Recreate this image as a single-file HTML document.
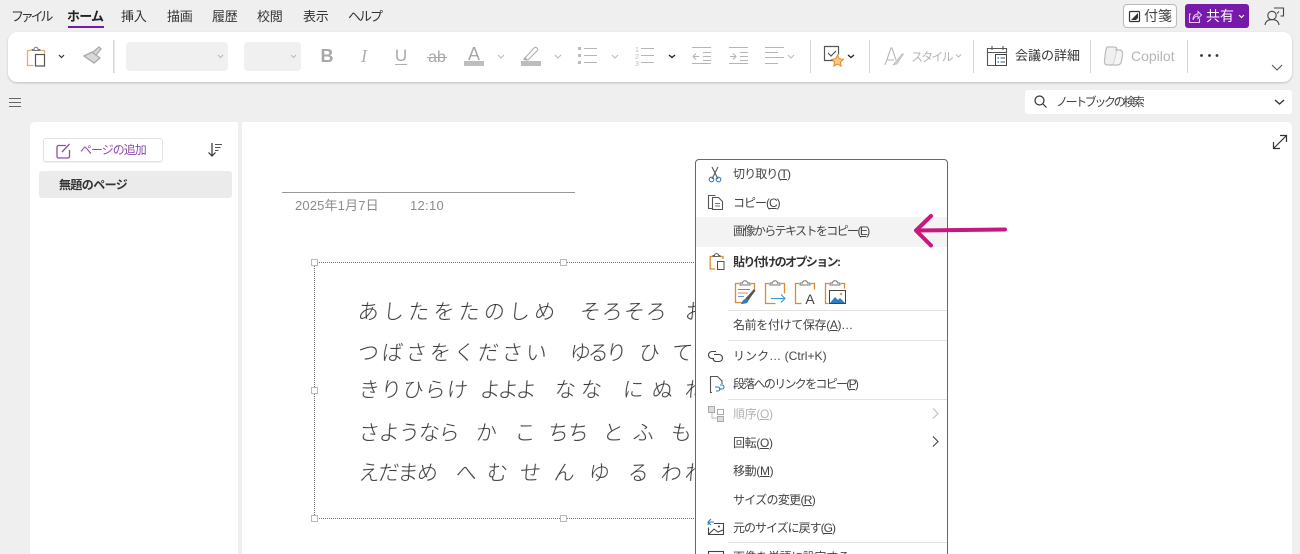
<!DOCTYPE html>
<html lang="ja"><head><meta charset="utf-8">
<style>
html,body{margin:0;padding:0;width:1300px;height:554px;overflow:hidden;background:#efefef}
body{position:relative;font-family:"Liberation Sans","Noto Sans CJK JP",sans-serif;color:#333;font-size:12px}
.t{position:absolute;white-space:nowrap;line-height:16px}
.b{position:absolute;box-sizing:border-box}
.tab{font-size:13px;top:9px;color:#333;letter-spacing:-.2px}
.m{left:733px;font-size:12px;letter-spacing:-.35px;color:#444}
.m u{text-underline-offset:1px}
.h{position:absolute;font-family:"Noto Sans CJK JP",sans-serif;font-size:21px;line-height:30px;color:#333;white-space:nowrap;font-weight:300;transform:skewX(-5deg);filter:blur(.25px)}
svg{position:absolute;left:0;top:0}
</style></head><body>

<span class="t tab" style="left:11px;letter-spacing:-3.2px">ファイル</span>
<span class="t tab" style="left:67px;font-weight:bold;color:#222;letter-spacing:-.8px">ホーム</span>
<div class="b" style="left:68px;top:26px;width:36px;height:2px;background:#7719aa"></div>
<span class="t tab" style="left:121px">挿入</span>
<span class="t tab" style="left:167px">描画</span>
<span class="t tab" style="left:212px">履歴</span>
<span class="t tab" style="left:257px">校閲</span>
<span class="t tab" style="left:303px">表示</span>
<span class="t tab" style="left:348px;letter-spacing:-2px">ヘルプ</span>

<div class="b" style="left:1123px;top:4px;width:54px;height:24px;background:#fff;border:1px solid #bbb;border-radius:4px"></div>
<span class="t" style="left:1144px;top:8px;font-size:14px;color:#444">付箋</span>
<div class="b" style="left:1185px;top:4px;width:64px;height:24px;background:#7719aa;border-radius:3px"></div>
<span class="t" style="left:1206px;top:8px;font-size:14px;color:#fff">共有</span>

<div class="b" style="left:8px;top:32px;width:1284px;height:50px;background:#fff;border-radius:9px;box-shadow:0 1px 2px rgba(0,0,0,.2)"></div>
<div class="b" style="left:126px;top:42px;width:102px;height:29px;background:#f0f0f0;border-radius:4px"></div>
<div class="b" style="left:244px;top:42px;width:57px;height:29px;background:#f0f0f0;border-radius:4px"></div>
<span class="t" style="left:911px;top:49px;font-size:12px;color:#b5b5b5;letter-spacing:-1.8px">スタイル</span>
<span class="t" style="left:1015px;top:48px;font-size:13px;color:#333;letter-spacing:0">会議の詳細</span>
<span class="t" style="left:1131px;top:48px;font-size:14px;color:#b5b5b5">Copilot</span>

<div class="b" style="left:1025px;top:90px;width:267px;height:24px;background:#fff;border-radius:3px"></div>
<span class="t" style="left:1056px;top:94px;font-size:12px;letter-spacing:-2.4px;color:#444">ノートブックの検索</span>

<div class="b" style="left:30px;top:122px;width:208px;height:440px;background:#fff;border-radius:5px 0 0 0"></div>
<div class="b" style="left:242px;top:122px;width:1050px;height:440px;background:#fff;border-radius:0 5px 0 0"></div>
<div class="b" style="left:43px;top:138px;width:120px;height:24px;background:#fff;border:1px solid #e2e2e2;border-radius:3px;box-shadow:0 1px 1px rgba(0,0,0,.06)"></div>
<span class="t" style="left:80px;top:142px;font-size:12px;letter-spacing:-1px;color:#8b4fa9">ページの追加</span>
<div class="b" style="left:39px;top:171px;width:193px;height:27px;background:#ebebeb;border-radius:3px"></div>
<span class="t" style="left:59px;top:177px;font-size:12px;font-weight:bold;letter-spacing:-.6px;color:#333">無題のページ</span>

<div class="b" style="left:282px;top:192px;width:293px;height:1px;background:#999"></div>
<span class="t" style="left:295px;top:198px;font-size:13px;color:#8c8c8c;letter-spacing:.15px">2025年1月7日</span>
<span class="t" style="left:410px;top:198px;font-size:13px;color:#8c8c8c;letter-spacing:.3px">12:10</span>

<div class="b" style="left:314px;top:262px;width:400px;height:257px;border:1px dotted #777"></div>

<span class="h" style="left:358px;top:296px;letter-spacing:4.2px">あしたをたのしめ</span>
<span class="h" style="left:580px;top:296px;letter-spacing:1px">そろそろ</span>
<span class="h" style="left:685px;top:296px">お</span>
<span class="h" style="left:358px;top:337px;letter-spacing:3px">つばさをください</span>
<span class="h" style="left:570px;top:337px;letter-spacing:-3px">ゆるり</span>
<span class="h" style="left:639px;top:337px">ひ</span>
<span class="h" style="left:672px;top:337px">て</span>
<span class="h" style="left:359px;top:374px;letter-spacing:1px">きりひらけ</span>
<span class="h" style="left:480px;top:374px;letter-spacing:-3px">よよよ</span>
<span class="h" style="left:555px;top:374px;letter-spacing:5px">なな</span>
<span class="h" style="left:623px;top:374px;letter-spacing:8px">にぬ</span>
<span class="h" style="left:685px;top:374px">ね</span>
<span class="h" style="left:359px;top:417px;letter-spacing:-1px">さようなら</span>
<span class="h" style="left:476px;top:417px">か</span>
<span class="h" style="left:515px;top:417px">こ</span>
<span class="h" style="left:548px;top:417px;letter-spacing:-1px">ちち</span>
<span class="h" style="left:603px;top:417px">と</span>
<span class="h" style="left:633px;top:417px">ふ</span>
<span class="h" style="left:671px;top:417px">も</span>
<span class="h" style="left:359px;top:457px;letter-spacing:-1.5px">えだまめ</span>
<span class="h" style="left:456px;top:457px">へ</span>
<span class="h" style="left:487px;top:457px">む</span>
<span class="h" style="left:520px;top:457px">せ</span>
<span class="h" style="left:554px;top:457px">ん</span>
<span class="h" style="left:589px;top:457px">ゆ</span>
<span class="h" style="left:628px;top:457px">る</span>
<span class="h" style="left:661px;top:457px">わ</span>
<span class="h" style="left:685px;top:457px">れ</span>

<!-- selection handles -->
<div class="b" style="left:311px;top:259px;width:7px;height:7px;background:#fff;border:1px solid #bbb"></div>
<div class="b" style="left:560px;top:259px;width:7px;height:7px;background:#fff;border:1px solid #bbb"></div>
<div class="b" style="left:311px;top:387px;width:7px;height:7px;background:#fff;border:1px solid #bbb"></div>
<div class="b" style="left:311px;top:515px;width:7px;height:7px;background:#fff;border:1px solid #bbb"></div>
<div class="b" style="left:560px;top:515px;width:7px;height:7px;background:#fff;border:1px solid #bbb"></div>

<!-- context menu -->
<div class="b" style="left:695px;top:159px;width:253px;height:410px;background:#fff;border:1px solid #666;border-radius:4px;overflow:hidden">
  <div class="b" style="left:0;top:57px;width:251px;height:30px;background:#f3f3f3"></div>
  <div class="b" style="left:32px;top:150px;width:219px;height:1px;background:#e2e2e2"></div>
  <div class="b" style="left:32px;top:180px;width:219px;height:1px;background:#e2e2e2"></div>
  <div class="b" style="left:32px;top:239px;width:219px;height:1px;background:#e2e2e2"></div>
  <div class="b" style="left:32px;top:382px;width:219px;height:1px;background:#e2e2e2"></div>
</div>
<span class="t m" style="top:166px;letter-spacing:-.9px">切り取り(<u>T</u>)</span>
<span class="t m" style="top:195px;letter-spacing:-1px">コピー(<u>C</u>)</span>
<span class="t m" style="top:223px;letter-spacing:-1.6px">画像からテキストをコピー(<u>E</u>)</span>
<span class="t m" style="top:254px;font-weight:bold;color:#333;letter-spacing:-1.6px">貼り付けのオプション:</span>
<span class="t m" style="top:317px">名前を付けて保存(<u>A</u>)…</span>
<span class="t m" style="top:348px;letter-spacing:.05px">リンク…  (Ctrl+K)</span>
<span class="t m" style="top:376px;letter-spacing:-1.7px">段落へのリンクをコピー(<u>P</u>)</span>
<span class="t m" style="top:406px;color:#b5b5b5">順序(<u>O</u>)</span>
<span class="t m" style="top:435px">回転(<u>O</u>)</span>
<span class="t m" style="top:463px">移動(<u>M</u>)</span>
<span class="t m" style="top:492px;letter-spacing:-.7px">サイズの変更(<u>R</u>)</span>
<span class="t m" style="top:520px;letter-spacing:-1px">元のサイズに戻す(<u>G</u>)</span>
<span class="t m" style="top:549px">画像を単語に設定する</span>

<svg width="1300" height="554" viewBox="0 0 1300 554" fill="none">
<!-- hamburger -->
<path d="M9 98.500h12M9 102.500h12M9 106.500h12" stroke="#666"/>
<!-- clipboard -->
<path d="M31 50.500h-3.500v15h6M41 50.500h3.500v3" stroke="#f0a860" stroke-width="1.300"/>
<path d="M32 50.500h8v-1h-2c0-3-4-3-4 0h-2z" stroke="#777"/>
<rect x="35.500" y="54.500" width="9" height="11.500" stroke="#555" stroke-width="1.200"/>
<path d="M59 55l2.500 2.500 2.500-2.500" stroke="#333" stroke-width="1.200"/>
<!-- format brush -->
<path d="M84 56l8-4 8 6-6 5zM93 52l6-5 2 2-5 6" stroke="#aaa" stroke-width="1.300" fill="#d8d8d8"/>
<!-- separators -->
<g fill="#d4d4d4"><rect x="113" y="40" width="1.500" height="33"/><rect x="810" y="40" width="1" height="33"/><rect x="869" y="40" width="1" height="33"/><rect x="973" y="40" width="1" height="33"/><rect x="1090" y="40" width="1" height="33"/><rect x="1187" y="40" width="1" height="33"/></g>
<!-- gray chevrons -->
<path d="M218 55l2.500 2.500 2.500-2.500M291 55l2.500 2.500 2.500-2.500M498 55l3 3 3-3M555 55l3 3 3-3M612 55l3 3 3-3M788 55l3 3 3-3M956 54.500l2.500 2.500 2.500-2.500" stroke="#bbb" stroke-width="1.100"/>
<!-- dark chevrons -->
<path d="M669 55l3 2.500 3-2.500M848 55l3 2.500 3-2.500" stroke="#222" stroke-width="1.300"/>
<path d="M1272 65l5 5 5-5" stroke="#555" stroke-width="1.100"/>
<path d="M1275 100l4.500 4 4.500-4" stroke="#333" stroke-width="1.400"/>
<!-- B I U ab -->
<text x="327" y="62" font-family="Liberation Sans" font-size="18" font-weight="bold" fill="#a8a8a8" text-anchor="middle">B</text>
<text x="364" y="62" font-family="Liberation Serif" font-size="18" font-style="italic" fill="#b0b0b0" text-anchor="middle">I</text>
<text x="401" y="61" font-family="Liberation Sans" font-size="17" fill="#a8a8a8" text-anchor="middle">U</text>
<path d="M395 64.500h12" stroke="#b0b0b0"/>
<text x="437" y="62" font-family="Liberation Sans" font-size="16" fill="#a8a8a8" text-anchor="middle">ab</text>
<path d="M427 57.500h20" stroke="#a8a8a8"/>
<!-- font color -->
<text x="474" y="60" font-family="Liberation Sans" font-size="18" fill="#a8a8a8" text-anchor="middle">A</text>
<rect x="464" y="61" width="20" height="5" fill="#bdbdbd"/>
<!-- highlighter -->
<path d="M525 58l9-10c2-2 5 1 3 3l-9 9h-3z" stroke="#b0b0b0" stroke-width="1.100"/>
<path d="M523 60l2-3 3 3z" fill="#aaa"/>
<rect x="521" y="61" width="20" height="5" fill="#bdbdbd"/>
<!-- bullets -->
<g fill="#bbb"><rect x="578" y="47" width="3" height="3"/><rect x="578" y="54" width="3" height="3"/><rect x="578" y="61" width="3" height="3"/></g>
<path d="M584 48.500h13M584 55.500h13M584 62.500h13" stroke="#b5b5b5"/>
<!-- numbers -->
<text x="637" y="52" font-family="Liberation Sans" font-size="7" fill="#bbb" text-anchor="middle">1</text>
<text x="637" y="59" font-family="Liberation Sans" font-size="7" fill="#bbb" text-anchor="middle">2</text>
<text x="637" y="66" font-family="Liberation Sans" font-size="7" fill="#bbb" text-anchor="middle">3</text>
<path d="M641 48.500h13M641 55.500h13M641 62.500h13" stroke="#b5b5b5"/>
<!-- outdent / indent / align -->
<path d="M692 47.500h19M703 52.500h8M703 56.500h8M703 60.500h8M692 63.500h19M699 56.500h-6m3-3l-3 3 3 3" stroke="#b5b5b5"/>
<path d="M729 47.500h19M740 52.500h8M740 56.500h8M740 60.500h8M729 63.500h19M730 56.500h6m-3-3l3 3-3 3" stroke="#b5b5b5"/>
<path d="M765 47.500h19M765 52.500h13M765 57.500h19M765 63.500h13" stroke="#b5b5b5"/>
<!-- todo star -->
<path d="M838 60.500h-13.500v-14h14v8" stroke="#555" stroke-width="1.200"/>
<path d="M828 53l3 3 5-5" stroke="#555" stroke-width="1.200"/>
<path d="M837.500 55l1.800 3.700 4 .6-2.900 2.800.7 4-3.600-1.900-3.600 1.900.7-4-2.900-2.800 4-.6z" fill="#fbc97c" stroke="#e08a2c"/>
<!-- style -->
<path d="M885 65l6-17h1l4 12M887 60h7" stroke="#b5b5b5" stroke-width="1.100"/>
<path d="M893 65l9-11c1-1 2 0 1 1l-6 9z" fill="#ccc" stroke="#bbb" stroke-width=".6"/>
<!-- calendar -->
<path d="M1003 65.500h-15.500v-17h19v5" stroke="#555" stroke-width="1.100"/>
<path d="M988 52.500h19M992 46v4M1003 46v4" stroke="#555" stroke-width="1.100"/>
<rect x="995.500" y="54.500" width="11" height="11" fill="#fff" stroke="#444"/>
<path d="M997.500 58h1.500M997.500 62h1.500" stroke="#1e88d0" stroke-width="1.500"/>
<path d="M1000.500 58h4.500M1000.500 62h4.500" stroke="#555"/>
<!-- copilot -->
<path d="M1108 47h6c2 0 3 1 3 3l-3 12c-.5 2-1.500 3-3.500 3h-3c-2.500 0-3.500-2-3-4l1-9c.5-3 1-5 2.500-5z" stroke="#bbb" stroke-width="1.200" fill="#f0f0f0"/>
<path d="M1115 50h4c3 0 4 2 3.500 5l-1 6c-.5 3-2 4-4.500 4h-6" stroke="#bbb" stroke-width="1.200" fill="#eee" fill-opacity=".6"/>
<!-- dots -->
<g fill="#333"><circle cx="1201.500" cy="55.500" r="1.400"/><circle cx="1209.500" cy="55.500" r="1.400"/><circle cx="1217" cy="55.500" r="1.400"/></g>
<!-- sticky -->
<rect x="1129.500" y="11.500" width="10" height="10" stroke="#333" stroke-width="1.200" rx="1"/>
<path d="M1131 20l7-7v5l-2 2z" fill="#333"/>
<!-- share -->
<path d="M1191 14h-1.500v8.500h10v-4" stroke="#e9c8f5" stroke-width="1.100"/>
<path d="M1193 20c0-4 2-6 5-6v-2.500l3.500 3.500-3.500 3.500v-2.500c-2 0-4 1-5 4z" stroke="#e9c8f5"/>
<path d="M1239 15l2.500 2.500 2.500-2.500" stroke="#fff" stroke-width="1.200"/>
<!-- person feedback -->
<circle cx="1272" cy="15.500" r="4.200" stroke="#444" stroke-width="1.100"/>
<path d="M1265 25c.5-4 3-5.500 7-5.500s6.500 1.500 7 5.500" stroke="#444" stroke-width="1.100"/>
<path d="M1274 8h9.500v8h-3" stroke="#444" stroke-width="1.100"/>
<path d="M1279 11.500l-2 2" stroke="#444"/>
<!-- search -->
<circle cx="1039.500" cy="100.500" r="4.500" stroke="#333" stroke-width="1.200"/>
<path d="M1043 104l3.500 3.500" stroke="#333" stroke-width="1.200"/>
<!-- expand -->
<path d="M1274 148l12-12M1280 135.500h6.500v6.500M1273.500 142v6.500h6.500" stroke="#333" stroke-width="1.200"/>
<!-- add page -->
<path d="M66 145.500h-7.500a1.500 1.500 0 0 0-1.500 1.500v9.500a1.500 1.500 0 0 0 1.500 1.500h9.500a1.500 1.500 0 0 0 1.500-1.500v-6.500" stroke="#8b4fa9" stroke-width="1.300"/>
<path d="M62 152l7.500-8" stroke="#8b4fa9" stroke-width="1.300"/>
<!-- sort -->
<path d="M212 143v13m-3.500-3.500l3.500 3.500 3.500-3.500" stroke="#333" stroke-width="1.200"/>
<path d="M215 144.500h7M215 147.500h5.500M215 150.500h3.500" stroke="#555"/>
<!-- scissors -->
<path d="M712 167l6 12M718 167l-6 12" stroke="#555" stroke-width="1.100"/>
<circle cx="711.500" cy="179.500" r="2.300" stroke="#2b7cc0" stroke-width="1.100"/>
<circle cx="718.500" cy="179.500" r="2.300" stroke="#2b7cc0" stroke-width="1.100"/>
<!-- copy -->
<path d="M712 208.500h-3.500v-13h7" stroke="#555" stroke-width="1.100"/>
<path d="M712.500 197.500h6l4 4v8h-10z" fill="#fff" stroke="#555" stroke-width="1.100"/>
<path d="M715 203.500h5M715 206h5" stroke="#777"/>
<!-- arrow -->
<path d="M1005 229.500l-88 1M931 216l-15 14.500 15 15" stroke="#c8177f" stroke-width="4" stroke-linecap="round" stroke-linejoin="round"/>
<!-- paste header -->
<path d="M713 256.500h-2.800v12.500h5M720 256.500h3v2.500" stroke="#e08a2c" stroke-width="1.300"/>
<path d="M713 256.500v-1h1.500c0-2.500 4-2.500 4 0h1.500v1z" stroke="#666"/>
<rect x="717.500" y="261.500" width="6.500" height="8" stroke="#555" fill="#fff"/>
<!-- paste opt 1 -->
<g>
<path d="M739 283.500h-3.500v19h6M751 283.500h3.500v6" stroke="#e08a2c" stroke-width="1.300"/>
<path d="M740 285v-2h2.500c0-3 5-3 5 0h2.500v2z" stroke="#777"/>
<path d="M738 289.500h12" stroke="#888"/><path d="M738 293h10" stroke="#e8807c"/><path d="M738 296.500h6" stroke="#5aa0d8"/>
<path d="M745 299l9-10 1.500 1.500-7.500 10.500z" fill="#555"/>
<path d="M741 304c2-5 5-6 7-4 1 3-3 4-7 4z" fill="#2b7cc0"/>
</g>
<!-- paste opt 2 -->
<path d="M769 283.500h-3.500v20h10M781 283.500h3.500v10" stroke="#e08a2c" stroke-width="1.300"/>
<path d="M770 285v-2h2.500c0-3 5-3 5 0h2.500v2z" stroke="#777"/>
<path d="M771 298.500h14m-4-4l4 4-4 4" stroke="#3a97d4" stroke-width="1.100"/>
<!-- paste opt 3 -->
<path d="M799 283.500h-3.500v20h6M811 283.500h3.500v6" stroke="#e08a2c" stroke-width="1.300"/>
<path d="M800 285v-2h2.500c0-3 5-3 5 0h2.500v2z" stroke="#777"/>
<text x="810" y="304" font-family="Liberation Sans" font-size="14" fill="#444" text-anchor="middle">A</text>
<!-- paste opt 4 -->
<path d="M829 283.500h-3.500v20h3M841 283.500h3.500v5" stroke="#e08a2c" stroke-width="1.300"/>
<path d="M830 285v-2h2.500c0-3 5-3 5 0h2.500v2z" stroke="#777"/>
<rect x="829.500" y="290.500" width="16" height="13" fill="#fff" stroke="#444"/>
<path d="M830 303l5-6 3 3 2-2 5 5z" fill="#2b7cc0"/>
<circle cx="841" cy="294" r="1.300" fill="#e9a23b"/>
<!-- link -->
<path d="M716 351.500h-4a3.500 3.500 0 0 0 0 7h2M714 354.500h5a3.500 3.500 0 0 1 0 7h-3a3.500 3.500 0 0 1-3-3" stroke="#444" stroke-width="1.100"/>
<!-- copy link -->
<path d="M712 392.500h-1.500v-16h7l4.500 4.500v3" stroke="#555" stroke-width="1.100"/>
<path d="M715 387h3a2 2 0 0 1 0 4h-2M720 385h2a2 2 0 0 1 0 4h-3" stroke="#2b7cc0" stroke-width="1.100"/>
<!-- order -->
<rect x="708.500" y="406.500" width="6" height="6" stroke="#aaa" fill="#ddd"/>
<rect x="717.500" y="409.500" width="6" height="5" stroke="#aaa"/>
<rect x="717.500" y="416.500" width="6" height="5" stroke="#aaa" fill="#ddd"/>
<path d="M712 413v5h5" stroke="#bbb"/>
<!-- submenu chevrons -->
<path d="M933 408.500l5 5-5 5" stroke="#bdbdbd" stroke-width="1.100"/>
<path d="M933 436.500l5 5-5 5" stroke="#444" stroke-width="1.100"/>
<!-- reset -->
<path d="M714 523.500h9.500v11h-15v-7" stroke="#444" stroke-width="1.100"/>
<path d="M709 534l5-5 4 3 5-2" stroke="#444"/>
<circle cx="719" cy="526.500" r="1" fill="#444"/>
<path d="M714 522h-3c-2 0-3 1-3 3M711 519l-3 3 3 3" stroke="#2b7cc0" stroke-width="1.100"/>
<!-- last row icon -->
<rect x="708.500" y="551.500" width="15" height="10" stroke="#444" stroke-width="1.100"/>
</svg>
</body></html>
